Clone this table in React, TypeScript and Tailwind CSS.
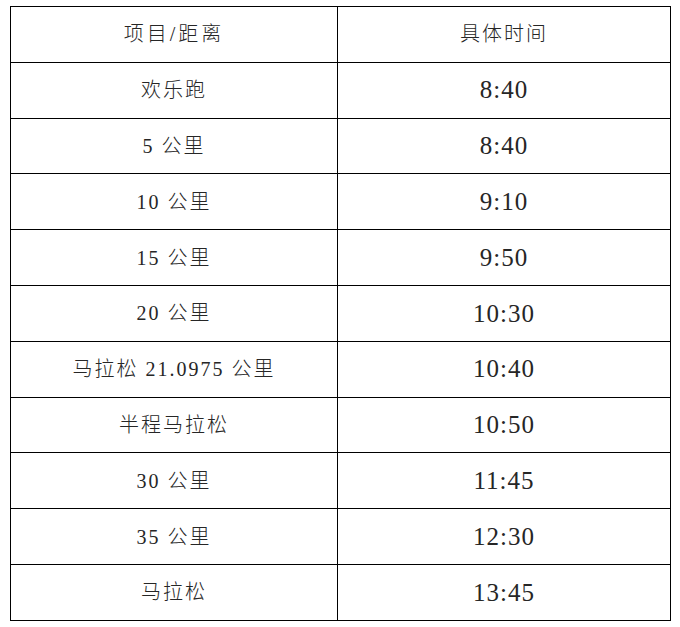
const rows = [
  { name: "欢乐跑", time: "8:40" },
  { name: "5 公里", time: "8:40" },
  { name: "10 公里", time: "9:10" },
  { name: "15 公里", time: "9:50" },
  { name: "20 公里", time: "10:30" },
  { name: "马拉松 21.0975 公里", time: "10:40" },
  { name: "半程马拉松", time: "10:50" },
  { name: "30 公里", time: "11:45" },
  { name: "35 公里", time: "12:30" },
  { name: "马拉松", time: "13:45" },
];

const cjk = "font-['Liberation_Serif','Noto_Sans_CJK_SC',serif]";

export default function App() {
  return (
    <div className="w-[680px] h-[627px] bg-white pt-[6px] pl-[10px]">
      <table className={`border-collapse w-[661px] text-[#262626] ${cjk}`}>
        <tbody>
          <tr className="h-[55.8px]">
            <td className="w-[327px] border-[1.5px] border-black text-center text-[20px] tracking-[3px] font-light">
              项目/距离
            </td>
            <td className="border-[1.5px] border-black text-center text-[20px] tracking-[2px] font-light">
              具体时间
            </td>
          </tr>
          {rows.map((row, i) => (
            <tr key={i} className="h-[55.8px]">
              <td className="border-[1.5px] border-black text-center text-[20px] tracking-[2px] font-light">
                {row.name}
              </td>
              <td className="border-[1.5px] border-black text-center text-[25px] tracking-[1px]">
                {row.time}
              </td>
            </tr>
          ))}
        </tbody>
      </table>
    </div>
  );
}
